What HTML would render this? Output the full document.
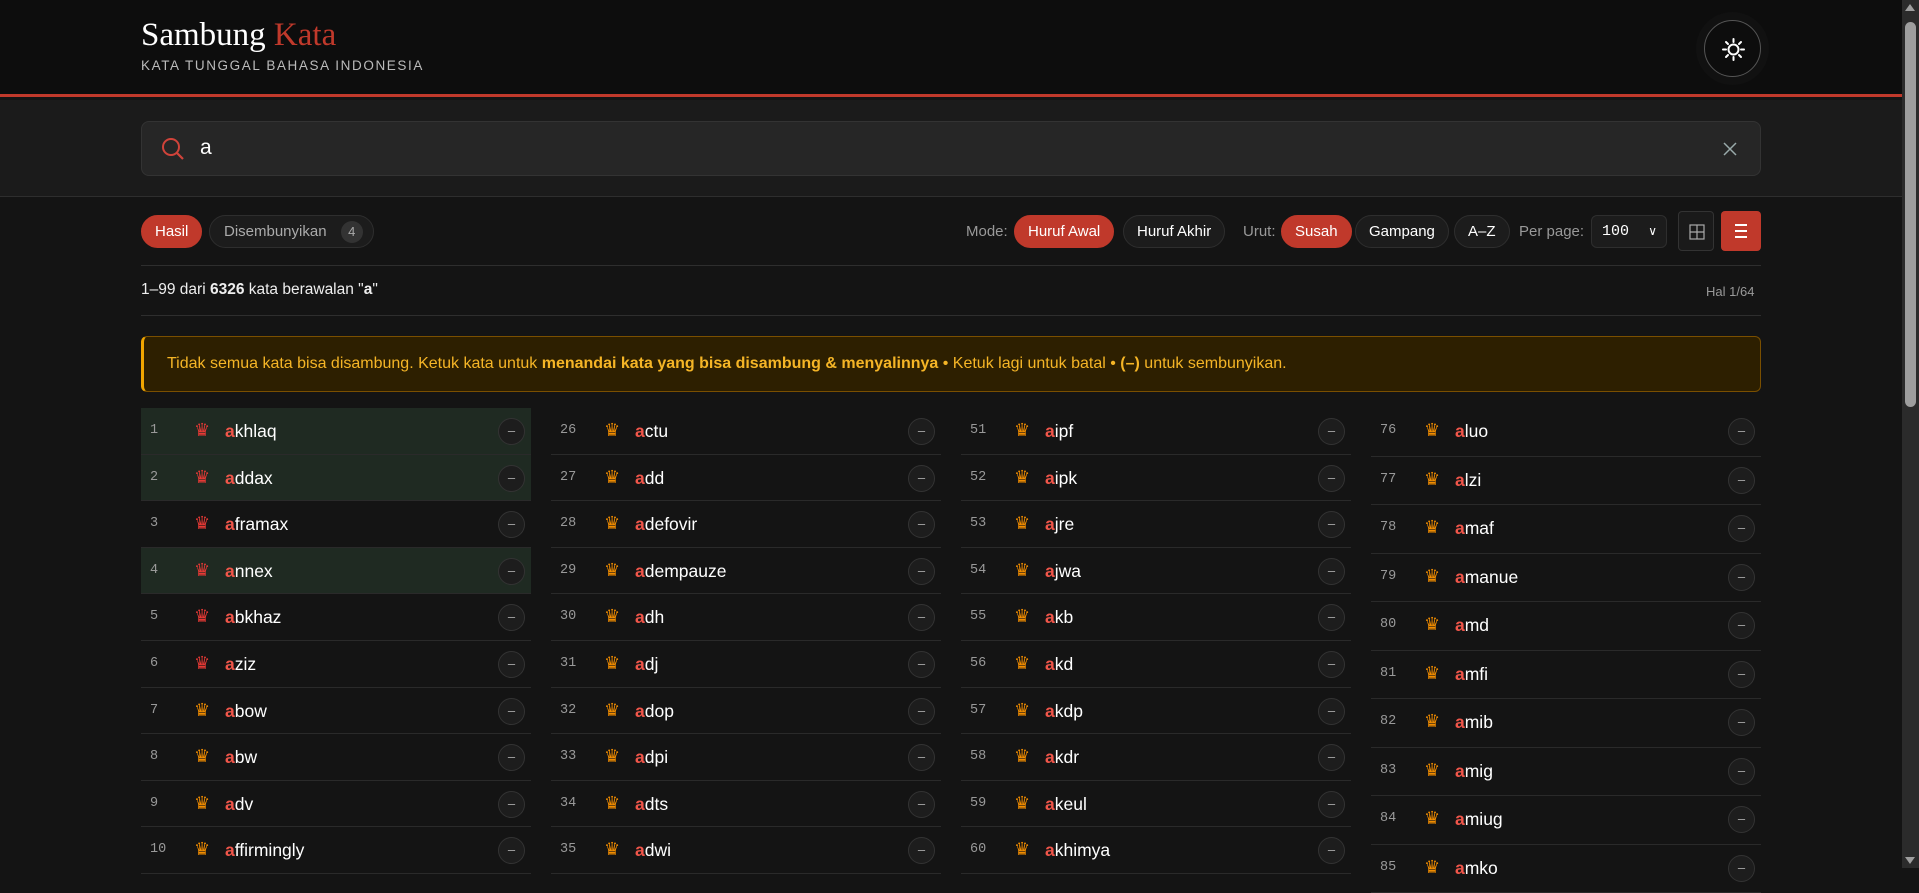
<!DOCTYPE html>
<html><head><meta charset="utf-8"><style>
*{box-sizing:border-box;margin:0;padding:0}
body{width:1919px;height:868px;overflow:hidden;background:#141414;font-family:"Liberation Sans",sans-serif;color:#eee;position:relative}
.hdr{position:absolute;left:0;top:0;width:1902px;height:97px;background:#0d0d0d;border-bottom:3px solid #c0392b}
.title{position:absolute;left:141px;top:17px;font-family:"Liberation Serif",serif;font-size:33px;color:#fff}
.title span{color:#c0392b}
.sub{position:absolute;left:141px;top:58px;font-size:13.5px;letter-spacing:1.6px;color:#bbb}
.sun{position:absolute;left:1704px;top:20px;width:57px;height:57px;border-radius:50%;border:1px solid #555;box-shadow:0 0 0 8px #111}
.band{position:absolute;left:0;top:100px;width:1902px;height:97px;background:#1b1b1b;border-bottom:1px solid #2e2e2e}
.search{position:absolute;left:141px;top:21px;width:1620px;height:55px;background:#262626;border:1px solid #333;border-radius:8px}
.search .q{position:absolute;left:58px;top:14px;font-size:21px;color:#fff}
.pill{position:absolute;height:33px;border-radius:17px;font-size:15px;line-height:31px;padding:0 13px;border:1px solid #2e2e2e;background:#1c1c1c;color:#fff;top:215px;white-space:nowrap}
.red{background:#c0392b;border-color:#c0392b}
.lbl{position:absolute;top:223px;font-size:15px;color:#999}
.hr{position:absolute;left:141px;width:1620px;height:1px;background:#2e2e2e}
.note{position:absolute;left:141px;top:336px;width:1620px;height:56px;background:#2d1f00;border:1px solid #7a4f00;border-left:3px solid #f0a500;border-radius:6px;color:#f5b526;font-size:16px;line-height:54px;padding-left:23px}
.col{position:absolute;top:408px;width:390px}
.r{position:relative;height:46.6px;border-bottom:1px solid #2a2a2a}
.c4 .r{height:48.5px}
.g{background:#1f2a22}
.n{position:absolute;left:9px;top:15px;font-family:"Liberation Mono",monospace;font-size:13.5px;color:#999}
.cr{position:absolute;left:53px;top:12px;font-size:18px;color:#f08c00}
.cr.h{color:#e53935}
.w{position:absolute;left:84px;top:13px;font-size:17.5px;color:#fff}
.w b{color:#f0564a;font-weight:bold}
.m{position:absolute;right:6px;top:10px;width:27px;height:27px;border-radius:50%;background:#1d1d1d;border:1px solid #333;color:#aaa;text-align:center;line-height:24px;font-size:13px}
</style></head><body>
<div class="hdr">
<div class="title">Sambung <span>Kata</span></div>
<div class="sub">KATA TUNGGAL BAHASA INDONESIA</div>
<div class="sun"><svg width="57" height="57" viewBox="0 0 57 57"><g stroke="#fff" stroke-width="2" fill="none" stroke-linecap="round"><circle cx="28.5" cy="28.5" r="5"/><path d="M28.5 18v3M28.5 36v3M18 28.5h3M36 28.5h3M21 21l2 2M34 34l2 2M21 36l2-2M34 23l2-2"/></g></svg></div>
</div>
<div class="band">
<div class="search">
<svg style="position:absolute;left:18px;top:14px" width="26" height="26" viewBox="0 0 26 26"><circle cx="11" cy="11" r="8" stroke="#d0433a" stroke-width="2" fill="none"/><path d="M17 17l6 6" stroke="#d0433a" stroke-width="2.2"/></svg>
<div class="q">a</div>
<svg style="position:absolute;right:22px;top:19px" width="16" height="16"><path d="M2 2l12 12M14 2L2 14" stroke="#9aa" stroke-width="1.5"/></svg>
</div>
</div>
<div class="pill red" style="left:141px">Hasil</div>
<div class="pill" style="left:209px;color:#aaa;padding-left:14px;padding-right:10px">Disembunyikan <span style="display:inline-block;background:#333;border-radius:11px;width:22px;height:22px;line-height:22px;text-align:center;margin-left:10px;font-size:13px">4</span></div>
<div class="lbl" style="left:966px">Mode:</div>
<div class="pill red" style="left:1014px">Huruf Awal</div>
<div class="pill" style="left:1123px">Huruf Akhir</div>
<div class="lbl" style="left:1243px">Urut:</div>
<div class="pill red" style="left:1281px">Susah</div>
<div class="pill" style="left:1355px">Gampang</div>
<div class="pill" style="left:1454px">A–Z</div>
<div class="lbl" style="left:1519px">Per page:</div>
<div class="pill" style="left:1591px;border-radius:6px;width:76px;padding:0 10px;font-family:'Liberation Mono',monospace;font-size:15px">100<span style="position:absolute;right:9px;top:0;font-family:'Liberation Sans';font-size:12px">&#8744;</span></div>
<div style="position:absolute;left:1678px;top:211px;width:36px;height:40px;border:1px solid #333;border-radius:4px;background:#1a1a1a"><svg width="36" height="40"><rect x="11" y="13" width="14" height="14" fill="none" stroke="#aaa" stroke-width="1.2"/><path d="M18 13v14M11 20h14" stroke="#aaa" stroke-width="1.2"/></svg></div>
<div style="position:absolute;left:1721px;top:211px;width:40px;height:40px;border-radius:4px;background:#c0392b"><svg width="40" height="40"><path d="M14 14h12M14 20h12M14 26h12" stroke="#fff" stroke-width="2"/></svg></div>
<div class="hr" style="top:265px"></div>
<div style="position:absolute;left:141px;top:281px;font-size:15.5px;color:#eee">1–99 dari <b>6326</b> kata berawalan "<b>a</b>"</div>
<div style="position:absolute;left:1706px;top:284px;font-size:13px;color:#999">Hal 1/64</div>
<div class="hr" style="top:315px"></div>
<div class="note">Tidak semua kata bisa disambung. Ketuk kata untuk <b>menandai kata yang bisa disambung &amp; menyalinnya</b> • Ketuk lagi untuk batal • <b>(–)</b> untuk sembunyikan.</div>

<div class="col" style="left:141px">
<div class="r g"><span class="n">1</span><span class="cr h">♛</span><span class="w"><b>a</b>khlaq</span><span class="m">–</span></div>
<div class="r g"><span class="n">2</span><span class="cr h">♛</span><span class="w"><b>a</b>ddax</span><span class="m">–</span></div>
<div class="r"><span class="n">3</span><span class="cr h">♛</span><span class="w"><b>a</b>framax</span><span class="m">–</span></div>
<div class="r g"><span class="n">4</span><span class="cr h">♛</span><span class="w"><b>a</b>nnex</span><span class="m">–</span></div>
<div class="r"><span class="n">5</span><span class="cr h">♛</span><span class="w"><b>a</b>bkhaz</span><span class="m">–</span></div>
<div class="r"><span class="n">6</span><span class="cr h">♛</span><span class="w"><b>a</b>ziz</span><span class="m">–</span></div>
<div class="r"><span class="n">7</span><span class="cr">♛</span><span class="w"><b>a</b>bow</span><span class="m">–</span></div>
<div class="r"><span class="n">8</span><span class="cr">♛</span><span class="w"><b>a</b>bw</span><span class="m">–</span></div>
<div class="r"><span class="n">9</span><span class="cr">♛</span><span class="w"><b>a</b>dv</span><span class="m">–</span></div>
<div class="r"><span class="n">10</span><span class="cr">♛</span><span class="w"><b>a</b>ffirmingly</span><span class="m">–</span></div>
</div>
<div class="col" style="left:551px">
<div class="r"><span class="n">26</span><span class="cr">♛</span><span class="w"><b>a</b>ctu</span><span class="m">–</span></div>
<div class="r"><span class="n">27</span><span class="cr">♛</span><span class="w"><b>a</b>dd</span><span class="m">–</span></div>
<div class="r"><span class="n">28</span><span class="cr">♛</span><span class="w"><b>a</b>defovir</span><span class="m">–</span></div>
<div class="r"><span class="n">29</span><span class="cr">♛</span><span class="w"><b>a</b>dempauze</span><span class="m">–</span></div>
<div class="r"><span class="n">30</span><span class="cr">♛</span><span class="w"><b>a</b>dh</span><span class="m">–</span></div>
<div class="r"><span class="n">31</span><span class="cr">♛</span><span class="w"><b>a</b>dj</span><span class="m">–</span></div>
<div class="r"><span class="n">32</span><span class="cr">♛</span><span class="w"><b>a</b>dop</span><span class="m">–</span></div>
<div class="r"><span class="n">33</span><span class="cr">♛</span><span class="w"><b>a</b>dpi</span><span class="m">–</span></div>
<div class="r"><span class="n">34</span><span class="cr">♛</span><span class="w"><b>a</b>dts</span><span class="m">–</span></div>
<div class="r"><span class="n">35</span><span class="cr">♛</span><span class="w"><b>a</b>dwi</span><span class="m">–</span></div>
</div>
<div class="col" style="left:961px">
<div class="r"><span class="n">51</span><span class="cr">♛</span><span class="w"><b>a</b>ipf</span><span class="m">–</span></div>
<div class="r"><span class="n">52</span><span class="cr">♛</span><span class="w"><b>a</b>ipk</span><span class="m">–</span></div>
<div class="r"><span class="n">53</span><span class="cr">♛</span><span class="w"><b>a</b>jre</span><span class="m">–</span></div>
<div class="r"><span class="n">54</span><span class="cr">♛</span><span class="w"><b>a</b>jwa</span><span class="m">–</span></div>
<div class="r"><span class="n">55</span><span class="cr">♛</span><span class="w"><b>a</b>kb</span><span class="m">–</span></div>
<div class="r"><span class="n">56</span><span class="cr">♛</span><span class="w"><b>a</b>kd</span><span class="m">–</span></div>
<div class="r"><span class="n">57</span><span class="cr">♛</span><span class="w"><b>a</b>kdp</span><span class="m">–</span></div>
<div class="r"><span class="n">58</span><span class="cr">♛</span><span class="w"><b>a</b>kdr</span><span class="m">–</span></div>
<div class="r"><span class="n">59</span><span class="cr">♛</span><span class="w"><b>a</b>keul</span><span class="m">–</span></div>
<div class="r"><span class="n">60</span><span class="cr">♛</span><span class="w"><b>a</b>khimya</span><span class="m">–</span></div>
</div>
<div class="col c4" style="left:1371px">
<div class="r"><span class="n">76</span><span class="cr">♛</span><span class="w"><b>a</b>luo</span><span class="m">–</span></div>
<div class="r"><span class="n">77</span><span class="cr">♛</span><span class="w"><b>a</b>lzi</span><span class="m">–</span></div>
<div class="r"><span class="n">78</span><span class="cr">♛</span><span class="w"><b>a</b>maf</span><span class="m">–</span></div>
<div class="r"><span class="n">79</span><span class="cr">♛</span><span class="w"><b>a</b>manue</span><span class="m">–</span></div>
<div class="r"><span class="n">80</span><span class="cr">♛</span><span class="w"><b>a</b>md</span><span class="m">–</span></div>
<div class="r"><span class="n">81</span><span class="cr">♛</span><span class="w"><b>a</b>mfi</span><span class="m">–</span></div>
<div class="r"><span class="n">82</span><span class="cr">♛</span><span class="w"><b>a</b>mib</span><span class="m">–</span></div>
<div class="r"><span class="n">83</span><span class="cr">♛</span><span class="w"><b>a</b>mig</span><span class="m">–</span></div>
<div class="r"><span class="n">84</span><span class="cr">♛</span><span class="w"><b>a</b>miug</span><span class="m">–</span></div>
<div class="r"><span class="n">85</span><span class="cr">♛</span><span class="w"><b>a</b>mko</span><span class="m">–</span></div>
</div>

<div style="position:absolute;left:1902px;top:0;width:17px;height:868px;background:#2b2b2b">
<div style="position:absolute;left:3px;top:22px;width:11px;height:385px;border-radius:6px;background:#9e9e9e"></div>
<div style="position:absolute;left:3px;top:4px;width:0;height:0;border-left:5.5px solid transparent;border-right:5.5px solid transparent;border-bottom:7px solid #9e9e9e"></div>
<div style="position:absolute;left:3px;bottom:4px;width:0;height:0;border-left:5.5px solid transparent;border-right:5.5px solid transparent;border-top:7px solid #9e9e9e"></div>
</div>
</body></html>
